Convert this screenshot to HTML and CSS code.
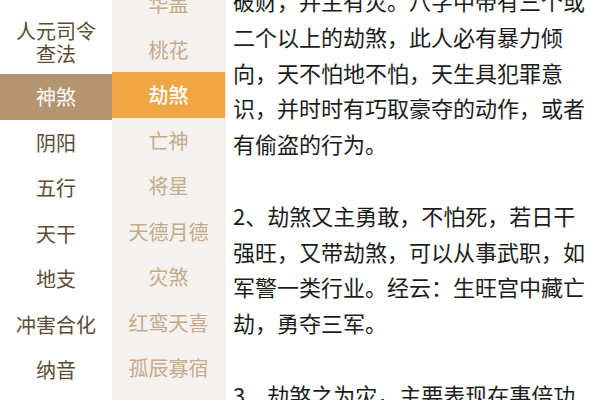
FILE: index.html
```html
<!DOCTYPE html>
<html lang="zh-CN">
<head>
<meta charset="utf-8">
<link rel="stylesheet" href="styles.css">
</head>
<body>
<div class="page">
  <ul class="nav-main">
    <li class="nav-item nav-item-first">人元司令<br>查法</li>
    <li class="nav-item nav-item-active">神煞</li>
    <li class="nav-item">阴阳</li>
    <li class="nav-item">五行</li>
    <li class="nav-item">天干</li>
    <li class="nav-item">地支</li>
    <li class="nav-item">冲害合化</li>
    <li class="nav-item">纳音</li>
  </ul>
  <ul class="nav-sub">
    <li class="sub-item">华盖</li>
    <li class="sub-item">桃花</li>
    <li class="sub-item sub-item-active">劫煞</li>
    <li class="sub-item">亡神</li>
    <li class="sub-item">将星</li>
    <li class="sub-item">天德月德</li>
    <li class="sub-item">灾煞</li>
    <li class="sub-item">红鸾天喜</li>
    <li class="sub-item">孤辰寡宿</li>
  </ul>
  <div class="content">
    <p class="para">破财，并主有灾。八字中带有三个或二个以上的劫煞，此人必有暴力倾向，天不怕地不怕，天生具犯罪意识，并时时有巧取豪夺的动作，或者有偷盗的行为。</p>
    <p class="para">2、劫煞又主勇敢，不怕死，若日干强旺，又带劫煞，可以从事武职，如军警一类行业。经云：生旺宫中藏亡劫，勇夺三军。</p>
    <p class="para">3、劫煞之为灾，主要表现在事倍功半，劳而无功。</p>
  </div>
</div>
</body>
</html>
```
FILE: styles.css
```css
html, body {
  margin: 0;
  padding: 0;
  background: #ffffff;
}
body {
  font-family: "Noto Sans CJK SC", "Noto Sans", sans-serif;
}
.page {
  display: flex;
  width: 600px;
  height: 400px;
  overflow: hidden;
}
.nav-main, .nav-sub {
  list-style: none;
  margin: 0;
  padding: 0;
  flex: none;
}
.nav-main {
  width: 112px;
  background: #ffffff;
}
.nav-item {
  height: 45.5px;
  display: flex;
  align-items: center;
  justify-content: center;
  text-align: center;
  font-size: 20px;
  line-height: 23px;
  color: #5b4c33;
}
.nav-item-first {
  height: 74px;
  box-sizing: border-box;
  padding-top: 9px;
}
.nav-item-active {
  background: #b59471;
  color: #ffffff;
}
.nav-sub {
  width: 113px;
  background: #f4f1ee;
  margin-top: -18.75px;
  height: 440px;
}
.sub-item {
  height: 45.5px;
  display: flex;
  align-items: center;
  justify-content: center;
  font-size: 20px;
  line-height: 22px;
  color: #c6aa8b;
}
.sub-item-active {
  background: #f1a645;
  color: #ffffff;
  font-weight: 500;
}
.content {
  flex: 1;
  min-width: 0;
  padding: 0 10px 0 7px;
  border-left: 1px solid #f1ede9;
  margin-top: -17px;
}
.para {
  margin: 0 0 35.8px 0;
  font-size: 22px;
  line-height: 35.8px;
  color: #1c1c1c;
}
```
